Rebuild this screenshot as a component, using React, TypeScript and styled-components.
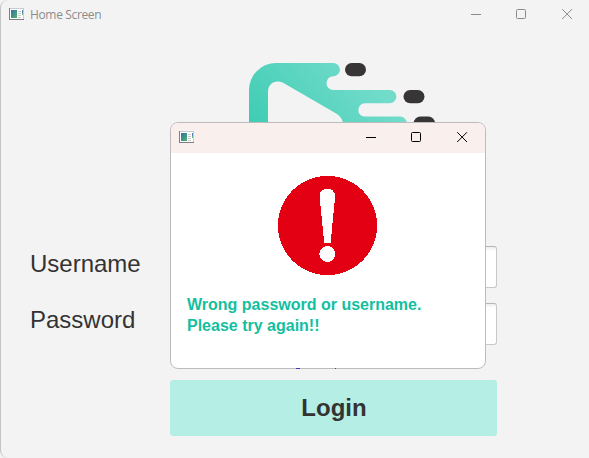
import React from "react";
import styled, { createGlobalStyle } from "styled-components";

const GlobalStyle = createGlobalStyle`
  * { box-sizing: border-box; }
  body { margin: 0; background: #f3f3f3; overflow: hidden; }
`;

const Window = styled.main`
  position: relative;
  width: 589px;
  height: 458px;
  background: #f3f3f3;
  border: 1px solid #c3c3c3;
  border-width: 0 0 0 1px;
  border-radius: 8px 8px 0 8px;
  font-family: "Liberation Sans", Arial, sans-serif;
  color: #333333;
`;

const TitleBar = styled.header<{ $dialog?: boolean }>`
  display: flex;
  align-items: center;
  height: ${(p) => (p.$dialog ? 30 : 28)}px;
  padding: 0 ${(p) => (p.$dialog ? "17px 2px" : "16px 0")} 8px;
  background: ${(p) => (p.$dialog ? "#f9f0ee" : "transparent")};
  color: ${(p) => (p.$dialog ? "#000000" : "#8a8a8a")};
`;

const Title = styled.span`
  margin: 2px 0 0 6px;
  font: 12px/16px "Open Sans", "Noto Sans", sans-serif;
  letter-spacing: -0.35px;
  color: #8c8c8c;
`;

const Controls = styled.div`
  display: flex;
  gap: 34px;
  height: 12px;
  padding-top: 1px;
  margin-left: auto;
  svg:last-child { margin-left: 1px; }
`;

const LogoArea = styled.div`
  height: 218px;
  padding: 35px 0 0 248px;
  svg { display: block; }
`;

const Form = styled.form`
  display: grid;
  grid-template-columns: 140px 327px;
  row-gap: 15px;
  padding-left: 29px;
  align-items: center;
`;

const Label = styled.label<{ $lift?: number }>`
  font-size: 24px;
  line-height: 28px;
  padding-bottom: ${(p) => 7 + (p.$lift ?? 0)}px;
`;

const Input = styled.input`
  width: 327px;
  height: 42px;
  border: 1px solid #c8c8c8;
  border-top-color: #b5b5b5;
  border-radius: 3px;
  background: linear-gradient(#eeeeee, #ffffff 4px);
  padding: 0 10px;
  font-size: 24px;
  outline: none;
`;

const LoginButton = styled.button`
  grid-column: 2;
  margin-top: 20px;
  height: 56px;
  border: 0;
  border-radius: 3px;
  background: #b4eee4;
  color: #333333;
  padding: 0 0 0 1px;
  font: bold 24px/28px "Liberation Sans", Arial, sans-serif;
`;

const Dialog = styled.section`
  position: absolute;
  left: 169px;
  top: 122px;
  width: 316px;
  height: 247px;
  background: #ffffff;
  border: 1px solid #bdbbbb;
  border-radius: 8px;
  overflow: hidden;
`;

const DialogBody = styled.div`
  padding: 22px 16px 0;
`;

const AlertIcon = styled.svg`
  display: block;
  margin: 0 0 0 90px;
`;

const Message = styled.p`
  margin: 18px 0 0;
  font-size: 16px;
  font-weight: bold;
  line-height: 21px;
  color: #13bf9f;
  white-space: pre-line;
`;

const LinkEdge = styled.span<{ $x: number; $w: number }>`
  position: absolute;
  left: ${(p) => p.$x}px;
  top: 368px;
  width: ${(p) => p.$w}px;
  height: 1px;
  background: #4638b8;
`;

const AppIcon = () => (
  <svg width="15" height="12" viewBox="0 0 15 12" shapeRendering="crispEdges">
    <defs>
      <linearGradient id="screen" x1="0" y1="0" x2="1" y2="1">
        <stop offset="0" stopColor="#356cab" />
        <stop offset="1" stopColor="#4fb56a" />
      </linearGradient>
    </defs>
    <rect width="15" height="12" fill="#c8ccd2" />
    <path d="M0 0h1v11h14v1H0z" fill="#7e7e82" />
    <rect x="1" y="1" width="13" height="10" fill="#ffffff" />
    <rect x="2" y="2" width="6" height="8" fill="url(#screen)" />
    <path d="M9 3h3v1H9zM9 5h3v1H9zM9 7h3v1H9zM9 9h3v1H9z" fill="#cccccc" />
    <rect x="13" y="2" width="1" height="3" fill="#4f83b4" />
    <rect x="13" y="5" width="1" height="2" fill="#5cb785" />
  </svg>
);

const WindowControls = () => (
  <Controls>
    <svg width="11" height="11" fill="none" stroke="currentColor">
      <path d="M0 5.5h10" />
    </svg>
    <svg width="11" height="11" fill="none" stroke="currentColor">
      <rect x=".5" y=".5" width="9" height="9" rx="1" />
    </svg>
    <svg width="11" height="11" fill="none" stroke="currentColor">
      <path d="M.2.2l9.8 9.8M10 .2l-9.8 9.8" />
    </svg>
  </Controls>
);

const Logo = () => (
  <svg width="188" height="84" viewBox="249 63 188 84">
    <defs>
      <linearGradient id="mint" gradientUnits="userSpaceOnUse" x1="255" y1="130" x2="345" y2="50">
        <stop offset="0" stopColor="#3fccb3" />
        <stop offset="1" stopColor="#72dccb" />
      </linearGradient>
    </defs>
    <path
      fill="url(#mint)"
      fillRule="evenodd"
      d="M249 147V90A27 27 0 0 1 276 63H333.3a6.65 6.65 0 0 1 0 13.3a6.85 6.85 0 0 0 0 13.7H389.8a6.6 6.6 0 0 1 0 13.2H365a6.7 6.7 0 0 0 0 13.4H400a7 7 0 0 1 7 7V147ZM268 147V92C268 83 276 79 283.5 83L337 114Q343 118 343 125V147Z"
    />
    <g fill="#373536">
      <rect x="345" y="63" width="21" height="13.3" rx="6.65" />
      <rect x="403.5" y="90" width="21" height="13.2" rx="6.6" />
      <rect x="413.7" y="116.6" width="21.3" height="13.3" rx="6.65" />
    </g>
  </svg>
);

export default function App() {
  return (
    <>
      <GlobalStyle />
      <Window>
        <TitleBar>
          <AppIcon />
          <Title>Home Screen</Title>
          <WindowControls />
        </TitleBar>
        <LogoArea>
          <Logo />
        </LogoArea>
        <Form>
          <Label htmlFor="username">Username</Label>
          <Input id="username" />
          <Label htmlFor="password" $lift={2}>Password</Label>
          <Input id="password" type="password" />
          <LoginButton type="button">Login</LoginButton>
        </Form>
        <Dialog role="alertdialog">
          <TitleBar $dialog>
            <AppIcon />
            <WindowControls />
          </TitleBar>
          <DialogBody>
            <AlertIcon width="101" height="101" viewBox="277 175 101 101" shapeRendering="crispEdges">
              <circle cx="327.5" cy="225.5" r="49.6" fill="#e30013" />
              <path
                fill="#ffffff"
                d="M319.5 196C319.5 191.5 323 188.7 327.3 188.7S335.2 191.5 335.2 196L330.6 243H324.2Z"
              />
              <circle cx="327.3" cy="254" r="8" fill="#ffffff" />
            </AlertIcon>
            <Message>{"Wrong password or username.\nPlease try again!!"}</Message>
          </DialogBody>
        </Dialog>
        <LinkEdge $x={295} $w={4} />
        <LinkEdge $x={334} $w={1} />
      </Window>
    </>
  );
}
